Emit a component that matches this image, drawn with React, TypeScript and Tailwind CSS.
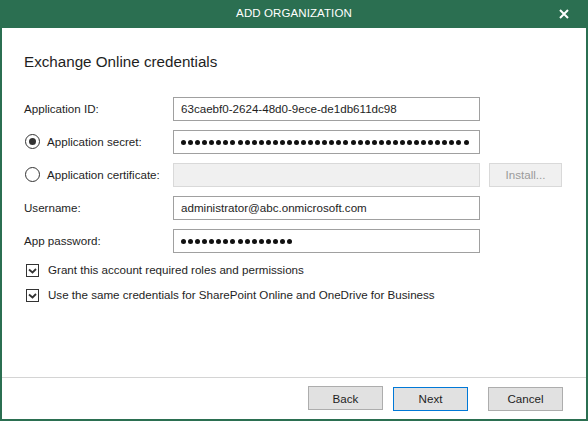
import React from 'react'

const font = { fontFamily: '"Liberation Sans", Arial, sans-serif' }

function Radio({ checked }: { checked?: boolean }) {
  return (
    <span className="w-[15px] h-[15px] rounded-full border border-[#333] bg-white flex items-center justify-center shrink-0">
      {checked && <span className="w-[7px] h-[7px] rounded-full bg-[#333]" />}
    </span>
  )
}

function Check() {
  return (
    <span className="w-[13px] h-[13px] border border-[#333] bg-white flex items-center justify-center shrink-0">
      <svg width="9" height="7" viewBox="0 0 9 7">
        <path d="M1 2.5 L4.5 5.5 L8 2" fill="none" stroke="#333" strokeWidth="1.8" />
      </svg>
    </span>
  )
}

function Field({ value, dots, disabled }: { value?: string; dots?: number; disabled?: boolean }) {
  return (
    <div
      className={`w-[307px] h-[24px] border flex items-center px-[7px] ${
        disabled ? 'bg-[#f0f0f0] border-[#d9d9d9]' : 'bg-white border-[#a0a0a0]'
      }`}
    >
      {dots ? (
        <div className="flex items-center gap-[2.07px]">
          {Array.from({ length: dots }).map((_, i) => (
            <span key={i} className="w-[5px] h-[5px] rounded-full bg-[#111]" />
          ))}
        </div>
      ) : (
        <span className="text-[11.6px] text-[#1e1e1e]">{value}</span>
      )}
    </div>
  )
}

function Button({ label, primary }: { label: string; primary?: boolean }) {
  return (
    <button
      className={`w-[75px] h-[24px] bg-[#e1e1e1] border text-[11.6px] text-[#1e1e1e] ${
        primary ? 'border-[#0078d7]' : 'border-[#adadad]'
      }`}
    >
      {label}
    </button>
  )
}

export default function App() {
  return (
    <div className="w-[588px] h-[421px] flex flex-col bg-white" style={font}>
      <div className="h-[28px] bg-[#2b6f51] flex items-center justify-center relative shrink-0">
        <span className="text-white text-[11.5px] tracking-[0.1px]">ADD ORGANIZATION</span>
        <svg className="absolute right-[19px] top-[9px]" width="10" height="10" viewBox="0 0 10 10">
          <path d="M1 1 L9 9 M9 1 L1 9" stroke="white" strokeWidth="2" />
        </svg>
      </div>

      <div className="flex-1 flex flex-col border-x-2 border-b-2 border-[#2b6f51]">
        <div className="px-[22px] pt-[24px] text-[11.6px] text-[#1e1e1e]">
          <h1 className="text-[15.2px] leading-[20px] text-[#1e1e1e]">Exchange Online credentials</h1>

          <div className="mt-[25px] flex flex-col gap-[9px]">
            <div className="flex items-center h-[24px]">
              <span className="w-[149px]">Application ID:</span>
              <Field value="63caebf0-2624-48d0-9ece-de1db611dc98" />
            </div>
            <div className="flex items-center h-[24px]">
              <div className="w-[149px] flex items-center gap-[7px] pl-[1px]">
                <Radio checked />
                <span>Application secret:</span>
              </div>
              <Field dots={41} />
            </div>
            <div className="flex items-center h-[24px]">
              <div className="w-[149px] flex items-center gap-[7px] pl-[1px]">
                <Radio />
                <span>Application certificate:</span>
              </div>
              <Field disabled />
              <button className="ml-[9px] w-[73px] h-[24px] bg-[#f0f0f0] border border-[#d9d9d9] text-[11.6px] text-[#9a9a9a]">
                Install...
              </button>
            </div>
            <div className="flex items-center h-[24px]">
              <span className="w-[149px]">Username:</span>
              <Field value="administrator@abc.onmicrosoft.com" />
            </div>
            <div className="flex items-center h-[24px]">
              <span className="w-[149px]">App password:</span>
              <Field dots={16} />
            </div>
          </div>

          <div className="mt-[7px] flex flex-col gap-[5px] pl-[2px]">
            <label className="flex items-center gap-[9px] h-[20px]">
              <Check />
              <span>Grant this account required roles and permissions</span>
            </label>
            <label className="flex items-center gap-[9px] h-[20px]">
              <Check />
              <span>Use the same credentials for SharePoint Online and OneDrive for Business</span>
            </label>
          </div>
        </div>

        <div className="mt-auto border-t border-[#d4d4d4] pt-[8px] pb-[8px] pr-[23px] flex justify-end">
          <Button label="Back" />
          <div className="ml-[10px]">
            <Button label="Next" primary />
          </div>
          <div className="ml-[20px]">
            <Button label="Cancel" />
          </div>
        </div>
      </div>
    </div>
  )
}
